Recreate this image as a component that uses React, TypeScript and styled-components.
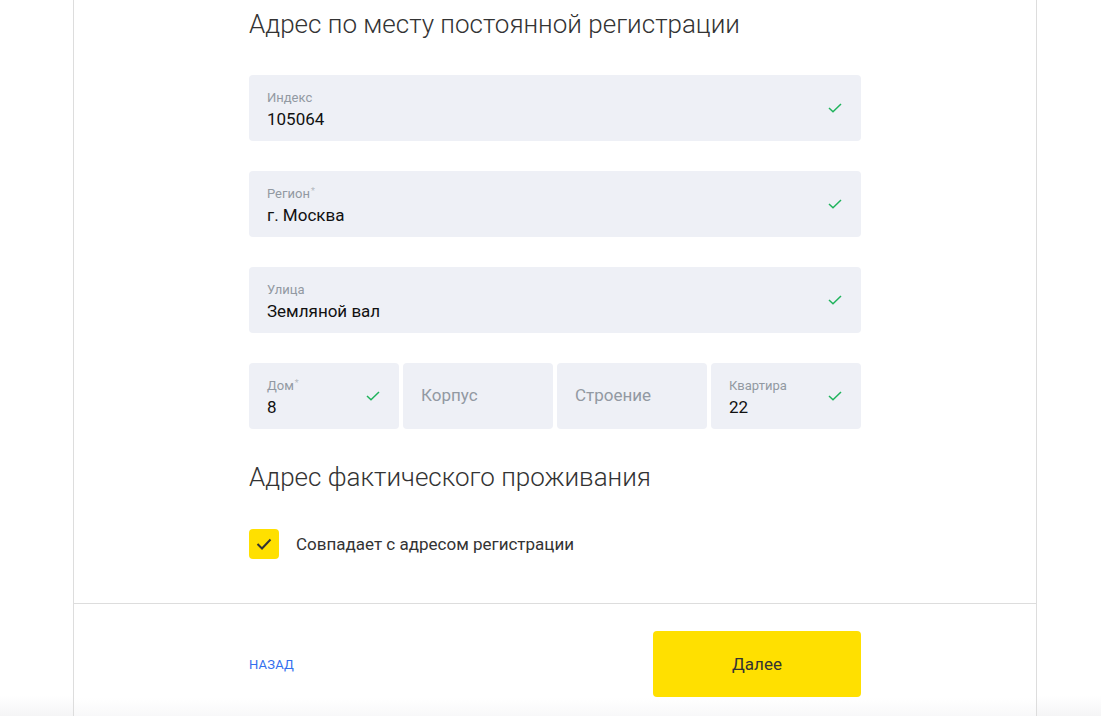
import React from "react";
import styled, { createGlobalStyle } from "styled-components";

const Global = createGlobalStyle`
  html, body { margin: 0; padding: 0; background: #ffffff; }
  body { font-family: Roboto, "Liberation Sans", Arial, sans-serif; color: #333333; }
  * { box-sizing: border-box; }
`;

const Page = styled.div`
  min-height: 716px;
  background: linear-gradient(to bottom, #ffffff 0, #ffffff 696px, #f5f5f6 716px);
`;

const Container = styled.div`
  margin-left: 73px;
  width: 964px;
  min-height: 716px;
  border-left: 1px solid #dddddd;
  border-right: 1px solid #dddddd;
  background: linear-gradient(to bottom, #ffffff 0, #ffffff 698px, #f8f8f9 716px);
`;

const Body = styled.div`
  padding: 6px 175px 44px;
  border-bottom: 1px solid #dddddd;
`;

const Heading = styled.h2<{ $mt?: number; $mb?: number }>`
  margin: ${(p) => p.$mt ?? 0}px 0 ${(p) => p.$mb ?? 33}px;
  font-family: Roboto, "Liberation Sans", Arial, sans-serif;
  font-weight: 300;
  font-size: 26px;
  line-height: 36px;
  color: #333333;
`;

const Fields = styled.div`
  display: flex;
  flex-direction: column;
  gap: 30px;
`;

const Row = styled.div`
  display: grid;
  grid-template-columns: repeat(4, 1fr);
  gap: 4px;
`;

const Field = styled.div`
  position: relative;
  height: 66px;
  background: #eef0f6;
  border-radius: 4px;
  padding: 3px 18px 0;
  display: flex;
  flex-direction: column;
  justify-content: center;
`;

const Label = styled.div`
  font-size: 13px;
  line-height: 16px;
  color: #9299a2;
  margin-bottom: 2px;
  sup { font-size: 9px; color: #b4b9c0; vertical-align: top; line-height: 10px; margin-left: 1px; }
`;

const Value = styled.div`
  font-size: 17px;
  line-height: 22px;
  color: #111111;
`;

const Placeholder = styled.div`
  font-size: 17px;
  line-height: 22px;
  color: #9299a2;
  margin-top: -5px;
`;

const CheckMark = styled.svg`
  position: absolute;
  right: 19px;
  top: 28px;
`;

const CheckRow = styled.label`
  display: flex;
  align-items: center;
  gap: 17px;
  font-size: 17px;
  color: #333333;
`;

const Box = styled.span`
  width: 30px;
  height: 30px;
  border-radius: 4px;
  background: #ffe000;
  display: flex;
  align-items: center;
  justify-content: center;
`;

const Footer = styled.div`
  padding: 27px 175px 0;
  display: flex;
  justify-content: space-between;
  align-items: center;
`;

const Back = styled.a`
  font-size: 13px;
  color: #336fee;
  text-decoration: none;
  letter-spacing: 0.2px;
`;

const Next = styled.button`
  width: 208px;
  height: 66px;
  border: none;
  border-radius: 4px;
  background: #ffe000;
  font-family: Roboto, "Liberation Sans", Arial, sans-serif;
  font-size: 17px;
  color: #333333;
`;

const Ok = () => (
  <CheckMark width="14" height="10" viewBox="0 0 14 10">
    <polyline points="1,5 5,8.8 13,1" fill="none" stroke="#1fb35c" strokeWidth="1.5" />
  </CheckMark>
);

type F = { label?: string; req?: boolean; value?: string; placeholder?: string; ok?: boolean };

const InputField = ({ label, req, value, placeholder, ok }: F) => (
  <Field>
    {label && (
      <Label>
        {label}
        {req && <sup>*</sup>}
      </Label>
    )}
    {value && <Value>{value}</Value>}
    {placeholder && <Placeholder>{placeholder}</Placeholder>}
    {ok && <Ok />}
  </Field>
);

export default function App() {
  return (
    <>
      <Global />
      <Page>
        <Container>
          <Body>
            <Heading>Адрес по месту постоянной регистрации</Heading>
            <Fields>
              <InputField label="Индекс" value="105064" ok />
              <InputField label="Регион" req value="г. Москва" ok />
              <InputField label="Улица" value="Земляной вал" ok />
              <Row>
                <InputField label="Дом" req value="8" ok />
                <InputField placeholder="Корпус" />
                <InputField placeholder="Строение" />
                <InputField label="Квартира" value="22" ok />
              </Row>
            </Fields>
            <Heading $mt={30} $mb={34}>Адрес фактического проживания</Heading>
            <CheckRow>
              <Box>
                <svg width="16" height="12" viewBox="0 0 16 12">
                  <polyline points="1.5,6 6,10.5 14.5,1.5" fill="none" stroke="#333" strokeWidth="2" />
                </svg>
              </Box>
              Совпадает с адресом регистрации
            </CheckRow>
          </Body>
          <Footer>
            <Back href="#">НАЗАД</Back>
            <Next>Далее</Next>
          </Footer>
        </Container>
      </Page>
    </>
  );
}
